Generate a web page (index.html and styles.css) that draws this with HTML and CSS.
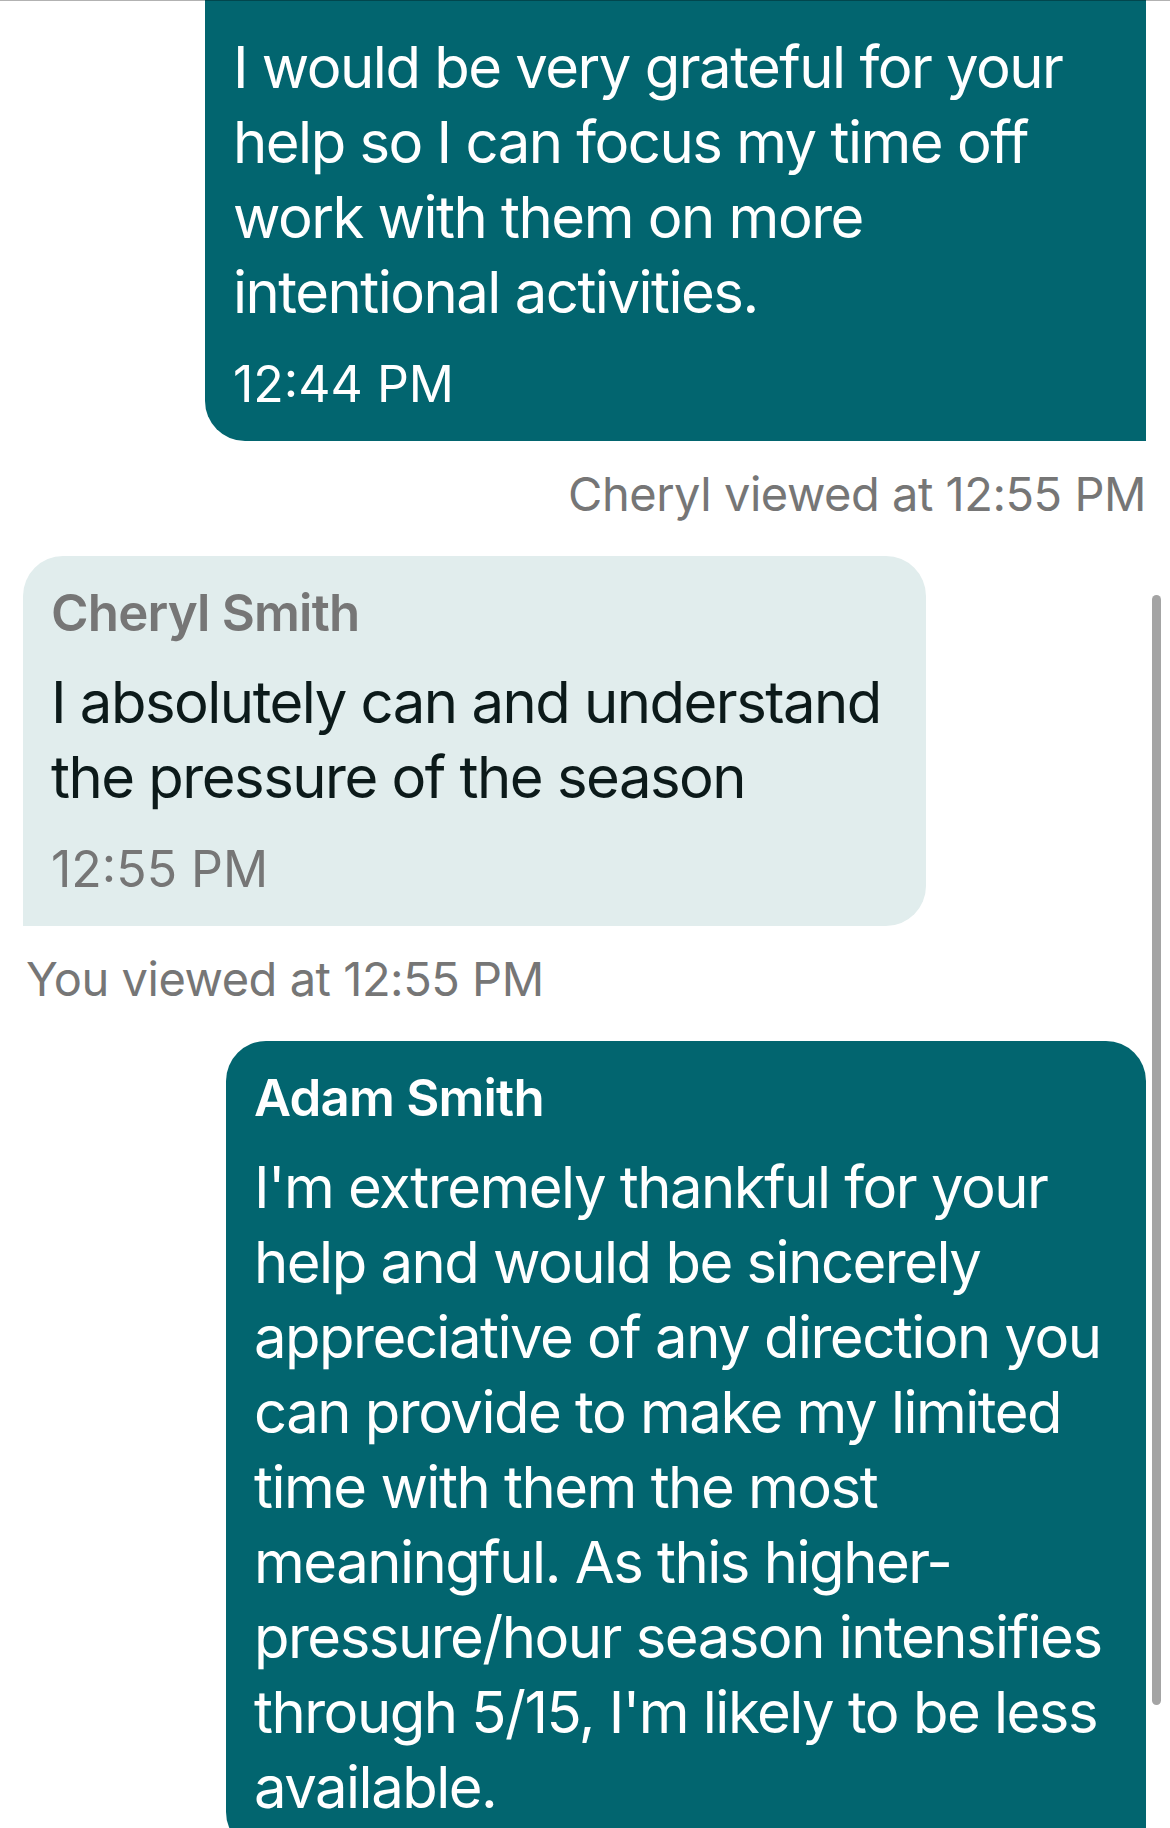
FILE: index.html
```html
<!DOCTYPE html>
<html lang="en">
<head>
    <meta charset="UTF-8">
    <meta name="viewport" content="width=device-width, initial-scale=1.0">
    <title>Messages</title>
    <link rel="stylesheet" href="styles.css">
</head>
<body>
    <div class="top-line"></div>

    <main class="thread">
        <div class="bubble bubble--mine bubble--cut bubble--w941">
            <p class="bubble__text">I would be very grateful for your help so I can focus my time off work with them on more intentional activities.</p>
            <p class="bubble__time">12:44 PM</p>
        </div>

        <p class="receipt receipt--mine">Cheryl viewed at 12:55 PM</p>

        <div class="bubble bubble--theirs bubble--w903">
            <p class="bubble__name">Cheryl Smith</p>
            <p class="bubble__text">I absolutely can and understand the pressure of the season</p>
            <p class="bubble__time">12:55 PM</p>
        </div>

        <p class="receipt receipt--theirs">You viewed at 12:55 PM</p>

        <div class="bubble bubble--mine bubble--w920">
            <p class="bubble__name">Adam Smith</p>
            <p class="bubble__text">I'm extremely thankful for your help and would be sincerely appreciative of any direction you can provide to make my limited time with them the most meaningful. As this higher-pressure/hour season intensifies through 5/15, I'm likely to be less available.</p>
        </div>
    </main>

    <div class="scrollbar"></div>
</body>
</html>
```

FILE: styles.css
```css
* {
    padding: 0;
    margin: 0;
    box-sizing: border-box;
}

body {
    font-family: 'Inter', 'Noto Sans', sans-serif;
    background-color: #ffffff;
    height: 1828px;
    overflow: hidden;
    position: relative;
}

/* thin divider of the header above the list */
.top-line {
    position: fixed;
    top: 0;
    left: 0;
    right: 0;
    height: 1px;
    background-color: rgba(0, 0, 0, 0.3);
    z-index: 2;
}

.thread {
    display: flex;
    flex-direction: column;
    padding: 0 24px 0 23px;
}

.bubble {
    padding: 26px 20px 27px 28px;
}

.bubble--mine {
    align-self: flex-end;
    background-color: #02656f;
    color: #ffffff;
    border-radius: 40px 40px 0 40px;
}

.bubble--theirs {
    align-self: flex-start;
    background-color: #e1eded;
    color: #0c1a1a;
    border-radius: 40px 40px 40px 0;
}

/* message that starts above the visible area */
.bubble--cut {
    border-top-left-radius: 0;
    border-top-right-radius: 0;
    padding-top: 30px;
}

.bubble--w941 { width: 941px; }
.bubble--w903 { width: 903px; }
.bubble--w920 { width: 920px; }

.bubble__name {
    font-size: 51px;
    line-height: 62px;
    font-weight: 600;
    letter-spacing: -0.016em;
    margin-bottom: 21px;
}

.bubble--theirs .bubble__name {
    color: #767676;
}

.bubble__text {
    font-size: 58px;
    line-height: 75px;
    font-weight: 400;
    letter-spacing: -0.026em;
}

.bubble__time {
    font-size: 50px;
    line-height: 60px;
    margin-top: 24px;
}

.bubble--theirs .bubble__time {
    color: #767676;
}

.receipt {
    font-size: 47px;
    line-height: 58px;
    letter-spacing: -0.01em;
    color: #767676;
    margin: 24px 0 33px;
}

.receipt--mine {
    text-align: right;
}

.receipt--theirs {
    margin-left: 3px;
}

.scrollbar {
    position: fixed;
    top: 595px;
    left: 1152px;
    width: 9px;
    height: 1110px;
    border-radius: 5px;
    background-color: #a4a4a4;
}
```
